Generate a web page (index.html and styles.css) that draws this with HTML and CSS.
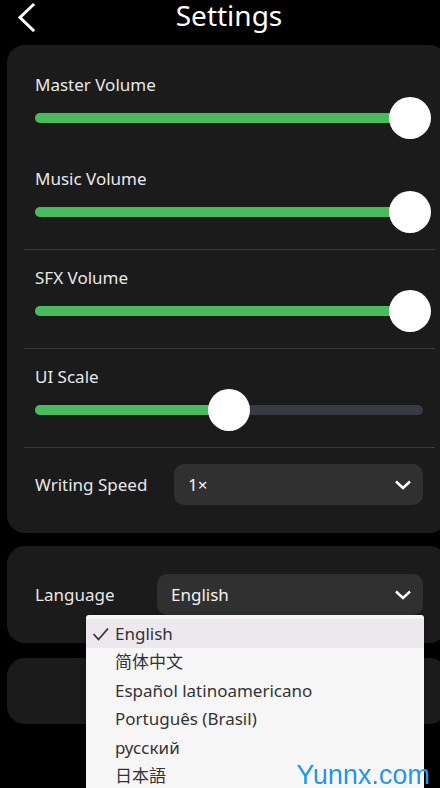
FILE: index.html
```html
<!DOCTYPE html>
<html>
<head>
  <meta charset="UTF-8">
  <title>Settings</title>
  <link rel="stylesheet" href="styles.css">
</head>
<body>
  <header class="top-bar">
    <button class="back" aria-label="Back">
      <svg width="20" height="30" viewBox="0 0 20 30"><path d="M16 3 L3 15.5 L16 28" fill="none" stroke="#fff" stroke-width="3" stroke-linecap="square"/></svg>
    </button>
    <h1>Settings</h1>
  </header>

  <section class="card">
    <div class="group">
      <div class="setting">
        <label>Master Volume</label>
        <div class="slider" style="--v:1"><div class="track"><div class="fill"></div><div class="thumb"></div></div></div>
      </div>
      <div class="setting">
        <label>Music Volume</label>
        <div class="slider" style="--v:1"><div class="track"><div class="fill"></div><div class="thumb"></div></div></div>
      </div>
    </div>
    <div class="group">
      <div class="setting">
        <label>SFX Volume</label>
        <div class="slider" style="--v:1"><div class="track"><div class="fill"></div><div class="thumb"></div></div></div>
      </div>
    </div>
    <div class="group">
      <div class="setting">
        <label>UI Scale</label>
        <div class="slider" style="--v:0.5"><div class="track"><div class="fill"></div><div class="thumb"></div></div></div>
      </div>
    </div>
    <div class="group">
      <div class="row">
        <label class="speed-label">Writing Speed</label>
        <div class="select">
          <span>1×</span>
          <svg class="chevron" width="18" height="10" viewBox="0 0 18 10"><path d="M2 1.5 L9 8 L16 1.5" fill="none" stroke="#fff" stroke-width="2.4"/></svg>
        </div>
      </div>
    </div>
  </section>

  <section class="card">
    <div class="group">
      <div class="row">
        <label class="lang-label">Language</label>
        <div class="select lang-select">
          <span>English</span>
          <svg class="chevron" width="18" height="10" viewBox="0 0 18 10"><path d="M2 1.5 L9 8 L16 1.5" fill="none" stroke="#fff" stroke-width="2.4"/></svg>
          <ul class="menu">
            <li class="active">
              <svg class="check" width="18" height="16" viewBox="0 0 18 16"><path d="M1.5 8 L6.5 13.5 L16 2.5" fill="none" stroke="#333" stroke-width="1.8"/></svg>
              English
            </li>
            <li>简体中文</li>
            <li>Español latinoamericano</li>
            <li>Português (Brasil)</li>
            <li>русский</li>
            <li>日本語</li>
          </ul>
        </div>
      </div>
    </div>
  </section>

  <section class="card card-empty"></section>

  <div class="watermark">Yunnx.com</div>
</body>
</html>
```

FILE: styles.css
```css
html, body {
  margin: 0;
  height: 788px;
  overflow: hidden;
}
body {
  background: #000;
  color: #ececec;
  font-family: "Noto Sans", "Noto Sans CJK SC", sans-serif;
  font-size: 17px;
}
.top-bar {
  display: flex;
  align-items: flex-start;
  height: 32px;
  margin-bottom: 13px;
}
.back {
  width: 44px;
  height: 32px;
  padding: 1px 0 0 17px;
  border: none;
  background: none;
  text-align: left;
}
.back svg {
  display: block;
}
.top-bar h1 {
  flex: 1;
  margin: 0;
  padding: 1px 26px 0 0;
  text-align: center;
  font-size: 28px;
  font-weight: normal;
  line-height: 28px;
  color: #fff;
}
.card {
  width: 411px;
  margin: 0 0 13px 7px;
  padding: 12px 12px 12px 17px;
  background: #1b1b1b;
  border-radius: 18px;
}
.card-empty {
  height: 42px;
  margin-top: 15px;
}
.group {
  padding: 16px 12px 16px 11px;
  border-top: 1px solid #3b3b3b;
  display: flex;
  flex-direction: column;
  gap: 28px;
}
.group:first-child {
  border-top: none;
}
.group label {
  display: block;
  line-height: 24px;
  color: #e8e8e8;
}
.slider {
  height: 42px;
  display: flex;
  align-items: center;
}
.track {
  position: relative;
  flex: 1;
  height: 10px;
  border-radius: 5px;
  background: #383b41;
}
.fill {
  height: 10px;
  border-radius: 5px;
  background: #4abb5d;
  width: calc(13px + (100% - 26px) * var(--v));
}
.thumb {
  position: absolute;
  top: -16px;
  left: calc(13px + (100% - 26px) * var(--v) - 21px);
  width: 42px;
  height: 42px;
  border-radius: 50%;
  background: #fff;
}
.row {
  display: flex;
  align-items: center;
}
.speed-label {
  width: 139px;
}
.lang-label {
  width: 122px;
}
.select {
  position: relative;
  flex: 1;
  height: 41px;
  display: flex;
  align-items: center;
  justify-content: space-between;
  padding: 0 11px 0 14px;
  background: #303030;
  border-radius: 10px;
  color: #f2f2f2;
}
.chevron {
  display: block;
}
.menu {
  position: absolute;
  top: 41px;
  right: -1px;
  width: 338px;
  margin: 0;
  padding: 4px 0 0;
  list-style: none;
  background: #f6f6f6;
  border-radius: 3px 3px 0 0;
  box-shadow: 0 2px 6px rgba(0, 0, 0, 0.3);
  z-index: 2;
}
.menu li {
  position: relative;
  height: 28.5px;
  line-height: 28.5px;
  padding-left: 29px;
  color: #333;
}
.menu li.active {
  height: 29px;
  line-height: 30px;
  background: #ede8ed;
}
.check {
  position: absolute;
  left: 6px;
  top: 7px;
}
.watermark {
  position: fixed;
  right: 10px;
  bottom: 0;
  line-height: 26px;
  font-family: "Liberation Sans", Arial, sans-serif;
  font-size: 27px;
  color: #2196f3;
  z-index: 3;
}
```
